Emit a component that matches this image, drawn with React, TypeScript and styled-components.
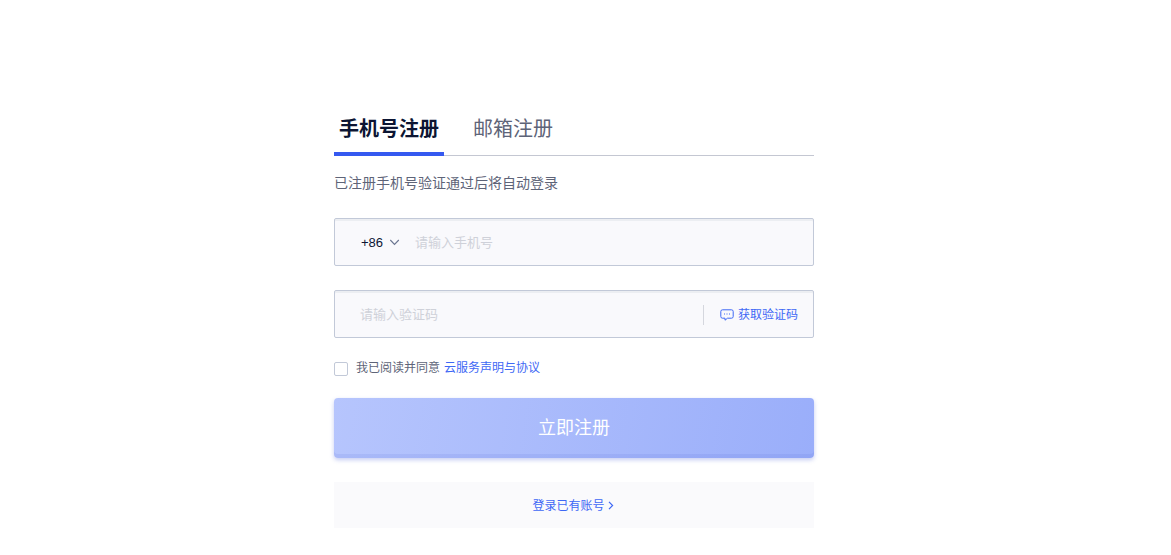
import React from "react";
import styled, { createGlobalStyle } from "styled-components";

const Global = createGlobalStyle`
  html, body { margin: 0; padding: 0; background: #fff; }
  body { font-family: "Liberation Sans", "Noto Sans CJK SC", sans-serif; }
`;

const Page = styled.div`
  width: 480px;
  margin: 0 0 0 334px;
  padding-top: 102px;
`;

const Tabs = styled.div`
  display: flex;
  height: 53px;
  border-bottom: 1px solid #c4c7d2;
`;

const Tab = styled.div<{ $active?: boolean }>`
  height: 53px;
  padding-bottom: 2px;
  box-sizing: border-box;
  display: flex;
  align-items: center;
  justify-content: center;
  width: ${(p) => (p.$active ? "110px" : "auto")};
  margin-left: ${(p) => (p.$active ? "0" : "29px")};
  font-size: 20px;
  font-weight: ${(p) => (p.$active ? 700 : 400)};
  color: ${(p) => (p.$active ? "#0c1533" : "#5e6478")};
  position: relative;
  ${(p) =>
    p.$active &&
    `&::after { content: ""; position: absolute; left: 0; right: 0; bottom: -1px; height: 4px; background: #3559f0; }`}
`;

const Hint = styled.div`
  margin-top: 17px;
  height: 21px;
  font-size: 14px;
  line-height: 20px;
  color: #5e6478;
`;

const Field = styled.div`
  margin-top: 24px;
  height: 48px;
  box-sizing: border-box;
  display: flex;
  align-items: center;
  background: #f9f9fc;
  border: 1px solid #c2c9d8;
  border-radius: 2px;
  box-shadow: inset 0 2px 0 #eceef2;
  padding-left: 25px;
`;

const Code = styled.span`
  font-size: 13px;
  color: #0c1533;
  margin-left: 1px;
`;

const Chevron = styled.svg`
  width: 11px;
  height: 7px;
  margin-left: 6px;
  margin-right: 15px;
`;

const Placeholder = styled.span`
  font-size: 13px;
  color: #cfd1d9;
  flex: 1;
  padding-bottom: 2px;
`;

const Divider = styled.div`
  width: 1px;
  height: 20px;
  background: #d5d7de;
  margin-top: 2px;
  margin-right: 16px;
`;

const SendCode = styled.div`
  display: flex;
  align-items: center;
  gap: 4px;
  font-size: 12px;
  color: #3e68f5;
  margin-right: 15px;
`;

const SendIcon = styled.svg`
  margin-top: 2px;
`;

const SendLabel = styled.span`
  padding-bottom: 2px;
`;

const Agreement = styled.div`
  margin-top: 20px;
  height: 20px;
  display: flex;
  align-items: center;
  font-size: 12px;
  color: #5e6478;
`;

const Checkbox = styled.span`
  width: 12px;
  height: 12px;
  border: 1px solid #c2c9d8;
  border-radius: 2px;
  margin-right: 8px;
  margin-top: 2px;
`;

const AgreeText = styled.span`
  padding-bottom: 4px;
`;

const AgreeLink = styled.span`
  color: #3e68f5;
  margin-left: 4px;
`;

const Submit = styled.div`
  margin-top: 20px;
  height: 60px;
  box-sizing: border-box;
  padding-bottom: 4px;
  border-radius: 4px;
  background: linear-gradient(100deg, #b6c5fd 0%, #9aaefa 100%);
  box-shadow: inset 0 -4px 0 rgba(70, 90, 210, 0.1), 0 2px 4px rgba(90, 110, 220, 0.35);
  color: #fff;
  font-size: 18px;
  display: flex;
  align-items: center;
  justify-content: center;
`;

const LoginBar = styled.div`
  margin-top: 24px;
  height: 46px;
  box-sizing: border-box;
  background: #fafafc;
  display: flex;
  align-items: center;
  justify-content: center;
  gap: 3px;
  font-size: 12px;
  color: #3e68f5;
  padding-right: 2px;
`;

const LoginLabel = styled.span`
  padding-bottom: 2px;
`;

export default function App() {
  return (
    <>
      <Global />
      <Page>
        <Tabs>
          <Tab $active>手机号注册</Tab>
          <Tab>邮箱注册</Tab>
        </Tabs>
        <Hint>已注册手机号验证通过后将自动登录</Hint>
        <Field>
          <Code>+86</Code>
          <Chevron viewBox="0 0 11 7" fill="none" stroke="#6a7590" strokeWidth="1.1">
            <path d="M1.3 1l4.2 4.5L9.8 1" />
          </Chevron>
          <Placeholder>请输入手机号</Placeholder>
        </Field>
        <Field>
          <Placeholder>请输入验证码</Placeholder>
          <Divider />
          <SendCode>
            <SendIcon width="14" height="12" viewBox="0 0 14 12" fill="none" stroke="#3e68f5" strokeWidth="1">
              <path d="M2.5 .8h9a1.7 1.7 0 0 1 1.7 1.7v5a1.7 1.7 0 0 1-1.7 1.7H7.5L5 11.2V9.2H2.5A1.7 1.7 0 0 1 .8 7.5v-5A1.7 1.7 0 0 1 2.5 .8z" />
              <path d="M4 5h1M6.5 5h1M9 5h1" />
            </SendIcon>
            <SendLabel>获取验证码</SendLabel>
          </SendCode>
        </Field>
        <Agreement>
          <Checkbox />
          <AgreeText>
            我已阅读并同意
            <AgreeLink>云服务声明与协议</AgreeLink>
          </AgreeText>
        </Agreement>
        <Submit>立即注册</Submit>
        <LoginBar>
          <LoginLabel>登录已有账号</LoginLabel>
          <svg width="6" height="9" viewBox="0 0 6 9" fill="none" stroke="#3e68f5" strokeWidth="1.2">
            <path d="M1 .8l3.6 3.7L1 8.2" />
          </svg>
        </LoginBar>
      </Page>
    </>
  );
}
